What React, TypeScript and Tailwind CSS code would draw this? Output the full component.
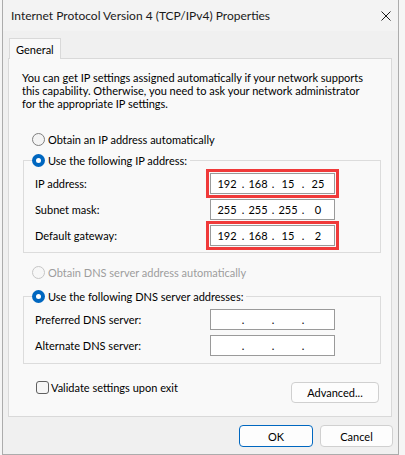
import React from "react";

function Radio({ checked, disabled }: { checked?: boolean; disabled?: boolean }) {
  if (checked) {
    return (
      <span className="flex h-[13px] w-[13px] shrink-0 items-center justify-center rounded-full bg-[#0067c0]">
        <span className="h-[5px] w-[5px] rounded-full bg-white" />
      </span>
    );
  }
  return (
    <span
      className={
        disabled
          ? "h-[13px] w-[13px] shrink-0 rounded-full border border-[#c6c6c6] bg-[#f7f7f7]"
          : "h-[13px] w-[13px] shrink-0 rounded-full border border-[#7f7f7f] bg-[#f4f4f4]"
      }
    />
  );
}

function IpBox({ octets, highlight }: { octets: string[]; highlight?: boolean }) {
  return (
    <div
      className={
        "flex h-[21px] w-[125px] items-center border border-[#9a9a9a] bg-white pl-[2px] text-[11px] text-black " +
        (highlight ? "outline-[3px] outline-offset-[1px] outline-solid outline-[#f03a3a]" : "")
      }
    >
      <span className="w-[28px] text-center">{octets[0]}</span>
      <span className="w-[4px] text-center">.</span>
      <span className="w-[26px] text-center">{octets[1]}</span>
      <span className="w-[4px] text-center">.</span>
      <span className="w-[26px] text-center">{octets[2]}</span>
      <span className="w-[4px] text-center">.</span>
      <span className="w-[26px] text-center">{octets[3]}</span>
    </div>
  );
}

function Row({ label, octets, highlight }: { label: string; octets: string[]; highlight?: boolean }) {
  return (
    <div className="flex h-[21px] items-center">
      <span className="w-[186px] pl-[11px]">{label}</span>
      <IpBox octets={octets} highlight={highlight} />
    </div>
  );
}

export default function App() {
  return (
    <div className="h-[455px] w-[405px] bg-[#f5f5f5] font-[Lato,sans-serif] text-[11px] leading-[13px] text-black">
      <div className="ml-[2px] flex h-[455px] w-[397px] flex-col border-x border-b border-[#acacac] bg-[#f0f0f0]">
        {/* Title bar */}
        <div className="flex h-[31px] shrink-0 items-center justify-between bg-[#f3f3f3] pl-[8px] pr-[7px]">
          <span className="text-[12px] text-[#1a1a1a]">Internet Protocol Version 4 (TCP/IPv4) Properties</span>
          <svg width="10" height="10" viewBox="0 0 10 10" className="block">
            <path d="M0.5 0.5 L9.5 9.5 M9.5 0.5 L0.5 9.5" stroke="#1a1a1a" strokeWidth="1" fill="none" />
          </svg>
        </div>

        {/* Tabs */}
        <div className="flex pt-[7px] pl-[6px]">
          <div className="relative z-10 -mb-px flex h-[21px] w-[52px] items-center border-x border-t border-[#d9d9d9] bg-[#f9f9f9] pl-[6px] text-[11px]">
            General
          </div>
        </div>

        {/* Panel */}
        <div className="ml-[5px] flex h-[359px] w-[384px] flex-col border border-[#d9d9d9] bg-[#f9f9f9] pt-[12px]">
          <div className="pl-[13px]">
            <div>You can get IP settings assigned automatically if your network supports</div>
            <div>this capability. Otherwise, you need to ask your network administrator</div>
            <div>for the appropriate IP settings.</div>
          </div>

          <div className="ml-[23px] mt-[21px] flex h-[16px] items-center gap-[3px]">
            <Radio />
            <span>Obtain an IP address automatically</span>
          </div>

          {/* Group 1 */}
          <div className="ml-[14px] mt-[13px] w-[358px] border border-[#dcdcdc] pb-[6px]">
            <div className="-mt-[9px] ml-[8px] flex h-[17px] w-fit items-center gap-[3px] bg-[#f9f9f9] pr-[3px]">
              <Radio checked />
              <span>Use the following IP address:</span>
            </div>
            <div className="mt-[4px] flex flex-col gap-[5px]">
              <Row label="IP address:" octets={["192", "168", "15", "25"]} highlight />
              <Row label="Subnet mask:" octets={["255", "255", "255", "0"]} />
              <Row label="Default gateway:" octets={["192", "168", "15", "2"]} highlight />
            </div>
          </div>

          <div className="ml-[23px] mt-[11px] flex h-[16px] items-center gap-[3px] text-[#9d9d9d]">
            <Radio disabled />
            <span>Obtain DNS server address automatically</span>
          </div>

          {/* Group 2 */}
          <div className="ml-[14px] mt-[16px] w-[358px] border border-[#dcdcdc] pb-[7px]">
            <div className="-mt-[9px] ml-[8px] flex h-[17px] w-fit items-center gap-[3px] bg-[#f9f9f9] pr-[3px]">
              <Radio checked />
              <span>Use the following DNS server addresses:</span>
            </div>
            <div className="mt-[4px] flex flex-col gap-[5px]">
              <Row label="Preferred DNS server:" octets={["", "", "", ""]} />
              <Row label="Alternate DNS server:" octets={["", "", "", ""]} />
            </div>
          </div>

          {/* Bottom row */}
          <div className="mt-[18px] flex items-start justify-between pl-[27px] pr-[12px]">
            <div className="-mt-[3px] flex h-[16px] items-center gap-[2px]">
              <span className="h-[13px] w-[13px] rounded-[3px] border border-[#606060] bg-[#f6f6f6]" />
              <span>Validate settings upon exit</span>
            </div>
            <div className="flex h-[21px] w-[88px] items-center justify-center rounded-[4px] border border-[#d0d0d0] bg-[#fdfdfd]">
              Advanced...
            </div>
          </div>
        </div>

        {/* Footer */}
        <div className="mt-[8px] flex justify-end gap-[7px] pr-[5px]">
          <div className="flex h-[22px] w-[74px] items-center justify-center rounded-[4px] border border-[#0067c0] bg-[#fdfdfd]">
            OK
          </div>
          <div className="flex h-[22px] w-[73px] items-center justify-center rounded-[4px] border border-[#d0d0d0] bg-[#fdfdfd]">
            Cancel
          </div>
        </div>
      </div>
    </div>
  );
}
